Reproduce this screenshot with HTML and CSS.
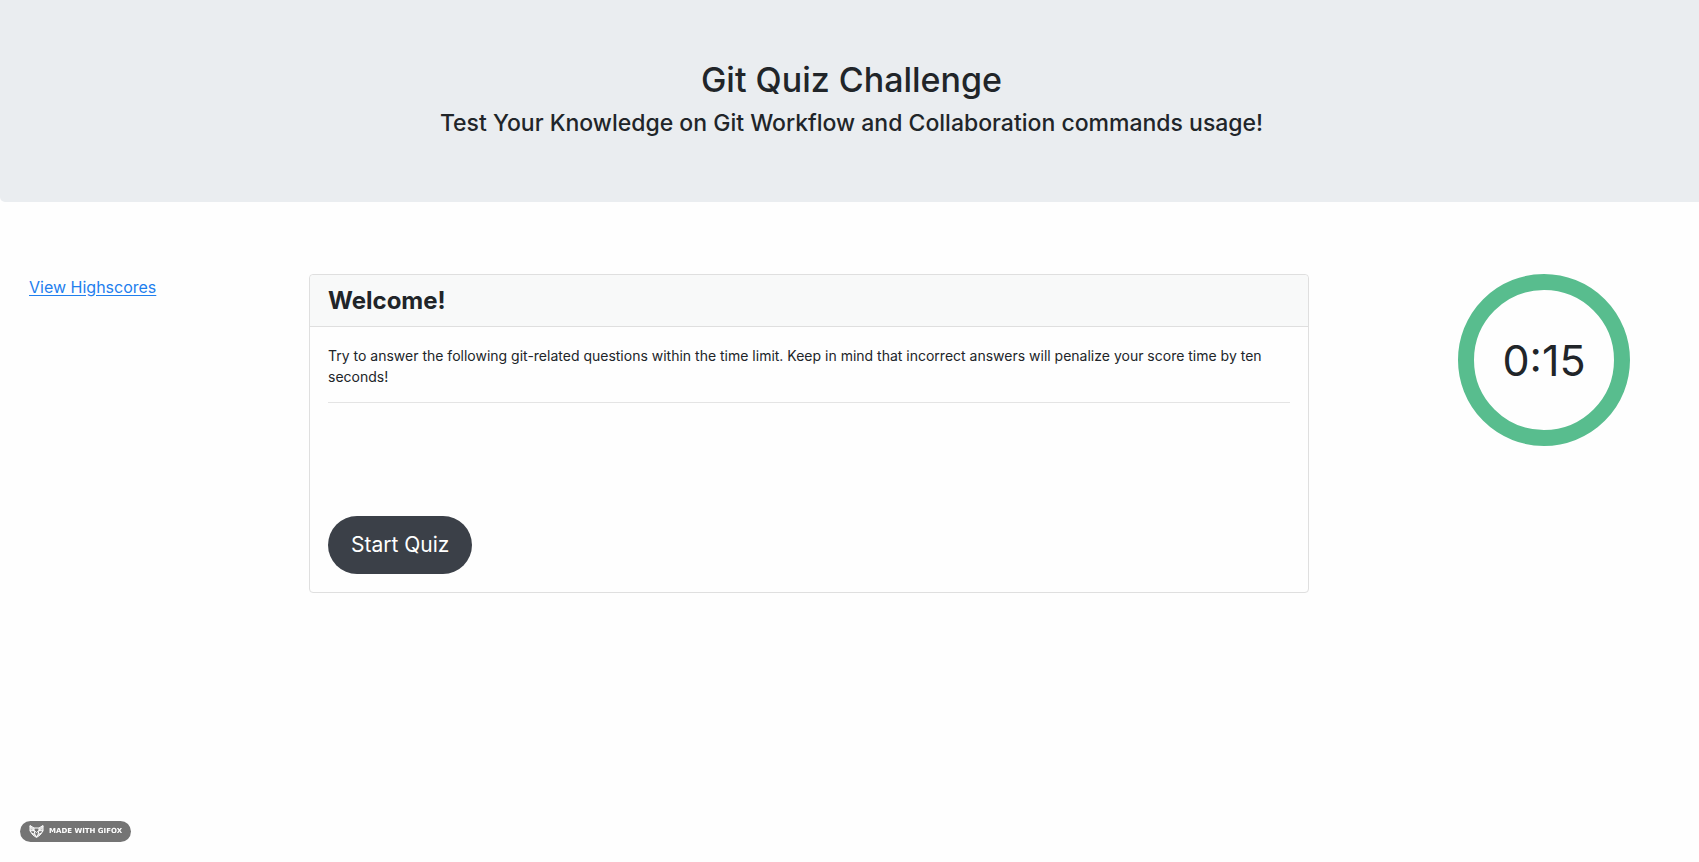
FILE: index.html
```html
<!DOCTYPE html>
<html lang="en">
<head>
<meta charset="utf-8">
<meta name="viewport" content="width=device-width, initial-scale=1">
<title>Git Quiz Challenge</title>
<link rel="stylesheet" href="styles.css">
</head>
<body>
<header class="banner">
  <h1 class="banner-title">Git Quiz Challenge</h1>
  <h2 class="banner-subtitle">Test Your Knowledge on Git Workflow and Collaboration commands usage!</h2>
</header>
<main class="layout">
  <nav class="side"><a class="scores-link" href="#highscores">View Highscores</a></nav>
  <section class="card">
    <h2 class="card-header">Welcome!</h2>
    <div class="card-body">
      <p class="card-text">Try to answer the following git-related questions within the time limit. Keep in mind that incorrect answers will penalize your score time by ten seconds!</p>
      <hr class="divider">
      <div class="answers"></div>
      <button class="start-button" type="button">Start Quiz</button>
    </div>
  </section>
  <aside class="timer-column">
    <div class="timer" role="timer">0:15</div>
  </aside>
</main>
<div class="made-with">
  <svg class="fox" viewBox="0 0 30 26" aria-hidden="true">
    <g fill="none" stroke="#fff" stroke-width="2" stroke-linejoin="round">
      <path d="M2 1l8 5h10l8-5v11l-3 4-3 4-7 5-7-5-3-4-3-4z"/>
      <path d="M2 3l8 8 5 4 5-4 8-8M2 12l8-1 2 8 3 5 3-5 2-8 8 1M5 16l7 3M25 16l-7 3M10 6v5M20 6v5"/>
    </g>
    <path fill="#fff" fill-opacity=".55" d="M2 1l8 5v5l-8 1zM28 1l-8 5v5l8 1zM5 16l7 3 3 6-7-5zM25 16l-7 3-3 6 7-5z"/>
  </svg>
  <span>MADE WITH GIFOX</span>
</div>
</body>
</html>
```

FILE: styles.css
```css
* { box-sizing: border-box; }

body {
  margin: 0;
  min-height: 100vh;
  background: #fefefe;
  color: #212529;
  font-family: Inter, "Liberation Sans", sans-serif;
  font-size: 16px;
  line-height: 24px;
}

h1, h2, p { margin: 0; }

.banner {
  padding: 58px 32px 64px 36px;
  border-radius: 0 0 0 5px;
  background: #eaedf0;
  text-align: center;
}

.banner-title {
  font-size: 34px;
  line-height: 44px;
  font-weight: 500;
}

.banner-subtitle {
  margin-top: 6px;
  font-size: 23px;
  line-height: 30px;
  font-weight: 500;
}

.layout {
  display: grid;
  grid-template-columns: 280fr 1000fr 321fr;
  align-items: start;
  padding: 72px 69px 0 29px;
}

.side { padding-top: 1px; }

.scores-link {
  color: #1f7fee;
  text-decoration: underline;
  text-underline-offset: 2px;
}

.card {
  border: 1px solid #dfdfdf;
  border-radius: 4px;
  background: #fefefe;
}

.card-header {
  padding: 10px 18px;
  border-bottom: 1px solid #dfdfdf;
  border-radius: 4px 4px 0 0;
  background: #f8f9f9;
  font-size: 24px;
  line-height: 31px;
  font-weight: 700;
}

.card-body { padding: 18px; }

.card-text {
  font-size: 14px;
  line-height: 21px;
}

.divider {
  margin: 15px 0 0;
  border: 0;
  border-top: 1px solid #e4e4e4;
}

.answers { height: 113px; }

.start-button {
  display: block;
  padding: 14px 23px;
  border: 0;
  border-radius: 29px;
  background: #3b4048;
  color: #fff;
  font-family: inherit;
  font-size: 21px;
  line-height: 30px;
}

.timer-column {
  display: flex;
  justify-content: flex-end;
}

.timer {
  display: grid;
  place-items: center;
  width: 172px;
  height: 172px;
  border: 16px solid #58bd8e;
  border-radius: 50%;
  font-size: 43px;
  line-height: 48px;
}

.made-with {
  position: fixed;
  left: 20px;
  bottom: 20px;
  display: flex;
  align-items: center;
  gap: 5px;
  padding: 3px 9px;
  border-radius: 11px;
  background: #747474;
  color: #fff;
  font-family: "DejaVu Sans", sans-serif;
  font-size: 7px;
  line-height: 15px;
  font-weight: 700;
}

.fox {
  width: 15px;
  height: 13px;
}
```
